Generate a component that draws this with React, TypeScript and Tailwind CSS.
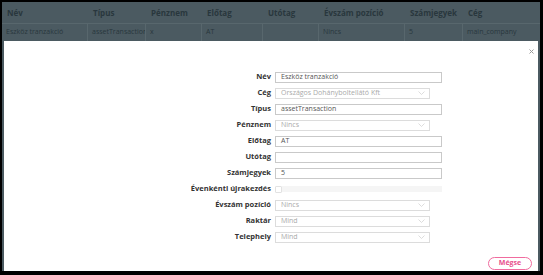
import React from 'react';

const columns = [
  { label: 'Név', value: 'Eszköz tranzakció', width: 'w-[86px]' },
  { label: 'Típus', value: 'assetTransaction', width: 'w-[58px]' },
  { label: 'Pénznem', value: 'x', width: 'w-[56px]' },
  { label: 'Előtag', value: 'AT', width: 'w-[61px]' },
  { label: 'Utótag', value: '', width: 'w-[56px]' },
  { label: 'Évszám pozíció', value: 'Nincs', width: 'w-[86px]' },
  { label: 'Számjegyek', value: '5', width: 'w-[58px]' },
  { label: 'Cég', value: 'main_company', width: 'flex-1' },
];

type Field =
  | { label: string; kind: 'text'; value: string }
  | { label: string; kind: 'select'; value: string }
  | { label: string; kind: 'check' };

const fields: Field[] = [
  { label: 'Név', kind: 'text', value: 'Eszköz tranzakció' },
  { label: 'Cég', kind: 'select', value: 'Országos Dohányboltellátó Kft' },
  { label: 'Típus', kind: 'text', value: 'assetTransaction' },
  { label: 'Pénznem', kind: 'select', value: 'Nincs' },
  { label: 'Előtag', kind: 'text', value: 'AT' },
  { label: 'Utótag', kind: 'text', value: '' },
  { label: 'Számjegyek', kind: 'text', value: '5' },
  { label: 'Évenkénti újrakezdés', kind: 'check' },
  { label: 'Évszám pozíció', kind: 'select', value: 'Nincs' },
  { label: 'Raktár', kind: 'select', value: 'Mind' },
  { label: 'Telephely', kind: 'select', value: 'Mind' },
];

const Chevron = () => (
  <svg width="7" height="4" viewBox="0 0 7 4" className="shrink-0">
    <polyline points="0.5,0.5 3.5,3.5 6.5,0.5" fill="none" stroke="#d4d4d4" strokeWidth="0.8" />
  </svg>
);

const FieldControl: React.FC<{ field: Field }> = ({ field }) => {
  if (field.kind === 'text') {
    return (
      <div className="w-[167px] h-[11px] border border-[#c9c9c9] bg-white flex items-center px-[5px] text-[7px] text-[#555]">
        {field.value}
      </div>
    );
  }
  if (field.kind === 'select') {
    return (
      <div className="w-[155px] h-[11px] border border-[#dcdcdc] bg-white flex items-center justify-between pl-[5px] pr-[4px] text-[7px] text-[#aaa]">
        <span>{field.value}</span>
        <Chevron />
      </div>
    );
  }
  return (
    <div className="w-[167px] h-[7px] flex items-center">
      <div className="w-[7px] h-[7px] border border-[#e2e2e2] bg-white rounded-[1px]" />
      <div className="flex-1 h-[6px] bg-[#f5f5f5]" />
    </div>
  );
};

const App: React.FC = () => {
  return (
    <div
      className="w-[543px] h-[275px] bg-black border-l-2 border-t-2 border-r-[3px] border-b-[4px] border-black overflow-hidden"
      style={{ fontFamily: '"Open Sans", "Liberation Sans", sans-serif' }}
    >
      <div className="w-full h-full bg-[#4b5a61] flex flex-col">
        {/* background table */}
        <div className="flex h-[22px] items-center border-b border-[#58676d]">
          {columns.map((c) => (
            <div key={c.label} className={`${c.width} px-[5px] text-[8px] font-bold text-[#29373d]`}>
              {c.label}
            </div>
          ))}
        </div>
        <div className="flex h-[17px]">
          {columns.map((c, i) => (
            <div
              key={c.label}
              className={`${c.width} px-[4px] flex items-center text-[7px] text-[#29373d] whitespace-nowrap overflow-hidden ${i < columns.length - 1 ? 'border-r border-[#58676d]' : ''}`}
            >
              {c.value}
            </div>
          ))}
        </div>

        {/* modal */}
        <div className="relative flex-1 mx-[2px] bg-white flex flex-col pt-[28px] pr-[6px]">
          <button className="absolute top-[8px] right-[4px]">
            <svg width="5" height="5" viewBox="0 0 5 5">
              <path d="M0.5 0.5 L4.5 4.5 M4.5 0.5 L0.5 4.5" stroke="#9a9a9a" strokeWidth="1" />
            </svg>
          </button>

          <div className="flex flex-col">
            {fields.map((f) => (
              <div key={f.label} className="flex items-center h-[16px] gap-[4px]">
                <div className="w-[267px] text-right text-[7.5px] font-bold text-[#333] whitespace-nowrap">{f.label}</div>
                <FieldControl field={f} />
              </div>
            ))}
          </div>

          <div className="flex justify-end mt-[12px]">
            <button className="w-[44px] h-[13px] rounded-full border border-[#f06b9e] text-[#e8508c] text-[7px] font-bold flex items-center justify-center">
              Mégse
            </button>
          </div>
        </div>
      </div>
    </div>
  );
};

export default App;
